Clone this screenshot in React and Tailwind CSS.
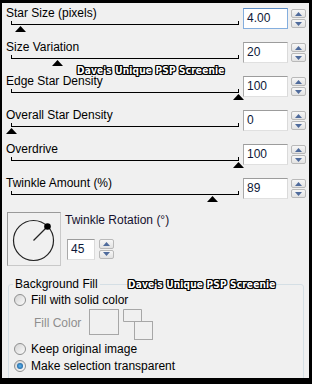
import React from "react";

const FONT = { fontFamily: '"Liberation Sans", Arial, sans-serif' };

const sliders = [
  { label: "Star Size (pixels)", value: "4.00", thumb: 9, focused: true },
  { label: "Size Variation", value: "20", thumb: 46 },
  { label: "Edge Star Density", value: "100", thumb: 227 },
  { label: "Overall Star Density", value: "0", thumb: 0 },
  { label: "Overdrive", value: "100", thumb: 227 },
  { label: "Twinkle Amount (%)", value: "89", thumb: 201 },
];

// small up / down arrow pair next to each number box
const Spinner = ({ className = "" }) => (
  <div className={"flex flex-col gap-[1px] w-[15px] " + className}>
    {["up", "down"].map((dir) => (
      <div
        key={dir}
        className="flex-1 flex items-center justify-center rounded-[2px] border border-[#b9b9b9] bg-linear-to-b from-[#f7f7f7] to-[#e2e2e2]"
      >
        <svg width="7" height="4" viewBox="0 0 7 4">
          {dir === "up" ? (
            <polygon points="0,4 7,4 3.5,0" fill="#4f6b9c" />
          ) : (
            <polygon points="0,0 7,0 3.5,4" fill="#4f6b9c" />
          )}
        </svg>
      </div>
    ))}
  </div>
);

const NumberBox = ({ value, focused, className = "" }) => (
  <div
    className={
      "bg-white border text-[12px] leading-[18px] pl-[3px] text-[#0c1738] " +
      (focused
        ? "border-[#84aede] border-t-[#5d8cc4] "
        : "border-t-[#9c9c9c] border-l-[#a9a9a9] border-r-[#dadada] border-b-[#e0e0e0] ") +
      className
    }
  >
    {value}
  </div>
);

const Radio = ({ checked, label }) => (
  <div className="flex items-center h-[17px] ml-[5px]">
    <div className="w-[12px] h-[12px] rounded-full border border-[#8e8f8f] bg-linear-to-br from-[#d4d4d4] to-[#fbfbfb] flex items-center justify-center">
      {checked && (
        <div className="w-[6px] h-[6px] rounded-full bg-radial from-[#5fb8ef] to-[#0d4f8f]" />
      )}
    </div>
    <span className="ml-[5px] text-[12px] leading-[14px] text-black">{label}</span>
  </div>
);

const Watermark = ({ className }) => (
  <div
    className={
      "absolute text-white font-bold text-[10px] leading-[10px] tracking-[0.2px] whitespace-nowrap [text-shadow:1px_0_0_#000,-1px_0_0_#000,0_1px_0_#000,0_-1px_0_#000,1px_1px_0_#000,-1px_-1px_0_#000,1px_-1px_0_#000,-1px_1px_0_#000] " +
      className
    }
    style={{ fontFamily: '"DejaVu Sans Condensed", "DejaVu Sans", sans-serif' }}
  >
    Dave's Unique PSP Screenie
  </div>
);

export default function App() {
  return (
    <div className="w-[312px] h-[384px] bg-black pt-[3px] pl-[2px] pr-[3px] pb-[6px]" style={FONT}>
      <div className="relative w-full h-full bg-[#f0f0f0] overflow-hidden">
        {/* Slider rows */}
        <div className="pt-[3px]">
          {sliders.map((s) => (
            <div key={s.label} className="flex h-[34px] pl-[4px]">
              <div className="w-[237px]">
                <div className="h-[14px] text-[12px] leading-[14px] text-black">{s.label}</div>
                <div className="relative ml-[5px] w-[228px] mt-[1px] h-[16px]">
                  <div className="h-[4px] border-x border-b border-black" />
                  <svg
                    className="absolute top-[5px]"
                    style={{ left: s.thumb - 5 }}
                    width="11"
                    height="6"
                    viewBox="0 0 11 6"
                  >
                    <polygon points="0,6 11,6 5.5,0" fill="#000" />
                  </svg>
                </div>
              </div>
              <NumberBox value={s.value} focused={s.focused} className="w-[45px] h-[21px] mt-[2px]" />
              <Spinner className="ml-[3px] mt-[3px] h-[19px]" />
            </div>
          ))}
        </div>

        {/* Twinkle rotation */}
        <div className="flex mt-[2px]">
          <div className="ml-[5px] w-[54px] h-[54px] border border-t-[#9a9a9a] border-l-[#9a9a9a] border-r-[#c9c9c9] border-b-[#c9c9c9]">
            <svg width="52" height="52" viewBox="0 0 52 52">
              <circle cx="25.5" cy="27.5" r="20" fill="none" stroke="#222" strokeWidth="1.2" />
              <line x1="25.5" y1="27.5" x2="39.5" y2="13.5" stroke="#222" strokeWidth="1.2" />
              <circle cx="39.5" cy="13.5" r="3.3" fill="#000" />
            </svg>
          </div>
          <div className="ml-[4px] mt-[1px]">
            <div className="text-[12px] leading-[14px] text-[#14112e]">Twinkle Rotation (°)</div>
            <div className="flex mt-[12px] ml-[2px]">
              <NumberBox value="45" className="w-[28px] h-[21px]" />
              <Spinner className="ml-[4px] h-[20px]" />
            </div>
          </div>
        </div>

        {/* Background fill group */}
        <fieldset className="ml-[6px] mt-[11px] w-[296px] border border-[#d5dfe5] rounded-[3px] pb-[8px]">
          <legend className="ml-[4px] px-[2px] text-[12px] leading-[14px] text-black">Background Fill</legend>
          <Radio label="Fill with solid color" />
          <div className="flex mt-[1px] h-[31px]">
            <span className="ml-[25px] mt-[7px] text-[12px] leading-[14px] text-[#8e8e8e]">Fill Color</span>
            <div className="ml-[8px] w-[30px] h-[26px] border border-[#a7a7a7]" />
            <svg className="ml-[4px]" width="31" height="32" viewBox="0 0 31 32">
              <polyline points="11.5,12.5 0.5,12.5 0.5,0.5 18.5,0.5 18.5,12.5" fill="none" stroke="#a7a7a7" />
              <rect x="11.5" y="12.5" width="18" height="18" fill="none" stroke="#a7a7a7" />
            </svg>
          </div>
          <Radio label="Keep original image" />
          <Radio checked label="Make selection transparent" />
        </fieldset>

        <Watermark className="left-[75px] top-[63px]" />
        <Watermark className="left-[126px] top-[277px]" />
      </div>
    </div>
  );
}
